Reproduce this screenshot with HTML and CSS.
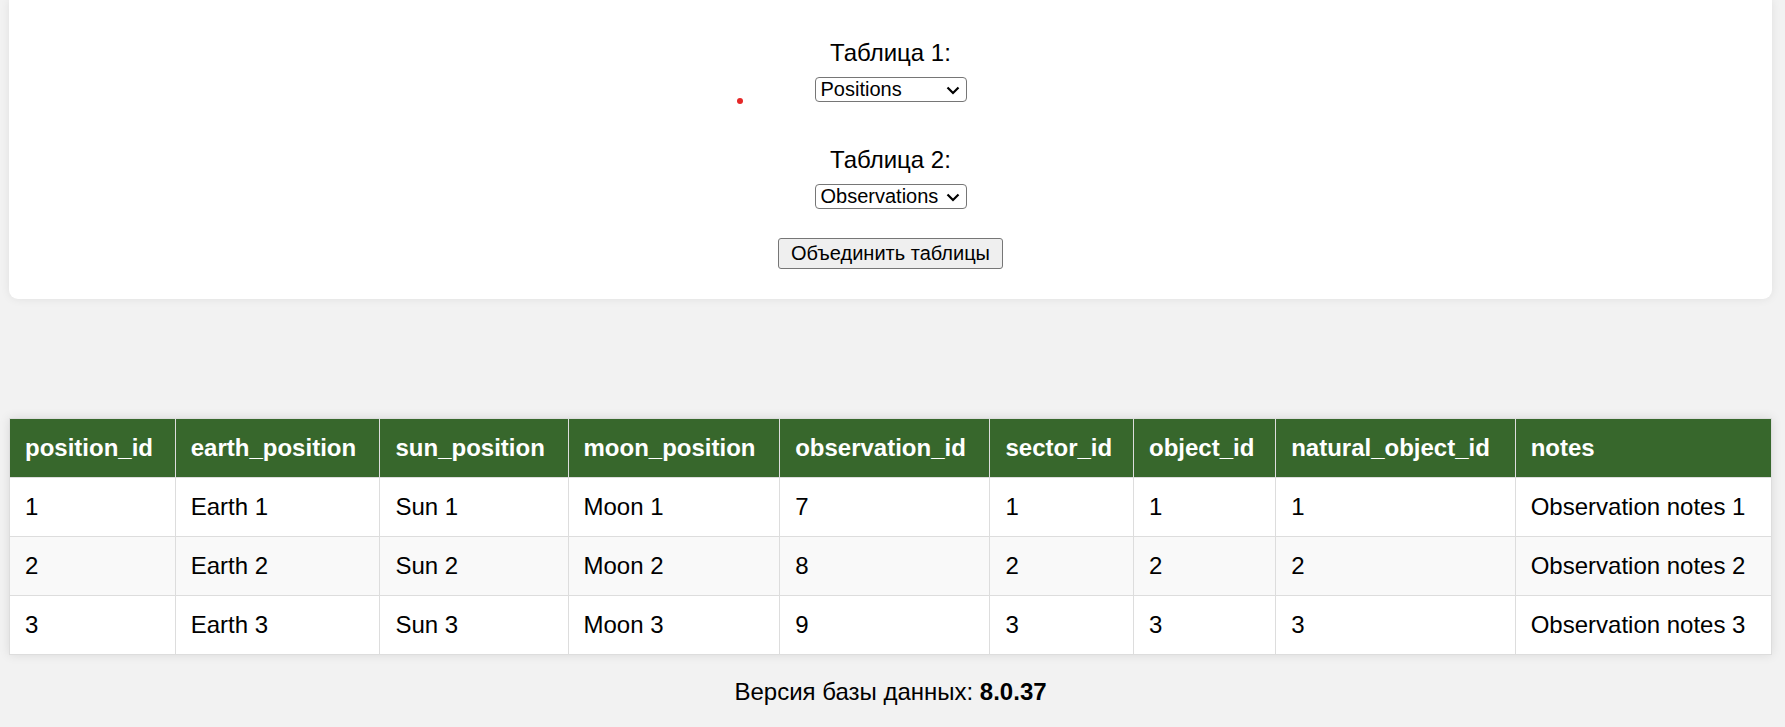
FILE: index.html
```html
<!DOCTYPE html>
<html lang="ru">
<head>
<meta charset="utf-8">
<title>Объединение таблиц</title>
<link rel="stylesheet" href="styles.css">
</head>
<body>
<div class="page">
  <form class="card">
    <div class="field">
      <label class="field-label" for="t1">Таблица 1:</label>
      <span class="select-wrap">
        <select id="t1" class="select">
          <option>Positions</option>
          <option>Observations</option>
        </select>
        <svg class="chev" width="14" height="9" viewBox="0 0 14 9"><path d="M1.5 1.5 L7 7 L12.5 1.5" fill="none" stroke="#000" stroke-width="2.2"/></svg>
      </span>
    </div>
    <div class="field field-second">
      <label class="field-label" for="t2">Таблица 2:</label>
      <span class="select-wrap">
        <select id="t2" class="select">
          <option>Observations</option>
          <option>Positions</option>
        </select>
        <svg class="chev" width="14" height="9" viewBox="0 0 14 9"><path d="M1.5 1.5 L7 7 L12.5 1.5" fill="none" stroke="#000" stroke-width="2.2"/></svg>
      </span>
    </div>
    <button type="button" class="btn">Объединить таблицы</button>
    <span class="dot"></span>
  </form>

  <table class="result">
    <thead>
      <tr>
        <th>position_id</th><th>earth_position</th><th>sun_position</th><th>moon_position</th><th>observation_id</th><th>sector_id</th><th>object_id</th><th>natural_object_id</th><th>notes</th>
      </tr>
    </thead>
    <tbody>
      <tr><td>1</td><td>Earth 1</td><td>Sun 1</td><td>Moon 1</td><td>7</td><td>1</td><td>1</td><td>1</td><td>Observation notes 1</td></tr>
      <tr><td>2</td><td>Earth 2</td><td>Sun 2</td><td>Moon 2</td><td>8</td><td>2</td><td>2</td><td>2</td><td>Observation notes 2</td></tr>
      <tr><td>3</td><td>Earth 3</td><td>Sun 3</td><td>Moon 3</td><td>9</td><td>3</td><td>3</td><td>3</td><td>Observation notes 3</td></tr>
    </tbody>
  </table>

  <p class="version">Версия базы данных: <b>8.0.37</b></p>
</div>
</body>
</html>
```
FILE: styles.css
```css
html, body {
  margin: 0;
  padding: 0;
  background: #f2f2f2;
}
body {
  font-family: "Liberation Sans", Arial, sans-serif;
  font-size: 24px;
  color: #000;
}
.page {
  padding: 0 13px 0 9px;
}
.card {
  position: relative;
  background: #fff;
  border-radius: 0 0 9px 9px;
  box-shadow: 0 0 10px rgba(0, 0, 0, 0.08);
  padding: 39px 0 30px;
  display: flex;
  flex-direction: column;
  align-items: center;
}
.field {
  display: flex;
  flex-direction: column;
  align-items: center;
}
.field-second {
  margin-top: 44px;
}
.field-label {
  display: block;
  line-height: 27px;
  margin-bottom: 11px;
}
.select-wrap {
  position: relative;
  display: block;
  width: 152px;
  height: 25px;
}
.select {
  appearance: none;
  -webkit-appearance: none;
  display: block;
  box-sizing: border-box;
  width: 152px;
  height: 25px;
  margin: 0;
  padding: 0 0 0 5px;
  font-family: "Liberation Sans", Arial, sans-serif;
  font-size: 20px;
  line-height: 23px;
  color: #000;
  background: #fff;
  border: 1px solid #767676;
  border-radius: 4px;
}
.chev {
  position: absolute;
  right: 7px;
  top: 9px;
  pointer-events: none;
}
.btn {
  box-sizing: border-box;
  margin-top: 29px;
  height: 31px;
  padding: 0 12px;
  font-family: "Liberation Sans", Arial, sans-serif;
  font-size: 20px;
  color: #000;
  background: #efefef;
  border: 1px solid #767676;
  border-radius: 3px;
}
.dot {
  position: absolute;
  left: 728px;
  top: 98px;
  width: 6px;
  height: 6px;
  border-radius: 50%;
  background: #e52727;
}
.result {
  margin-top: 119px;
  width: 100%;
  border-collapse: collapse;
  background: #fff;
  box-shadow: 0 0 10px rgba(0, 0, 0, 0.1);
}
.result th,
.result td {
  border: 1px solid #dddddd;
  padding: 15px;
  line-height: 28px;
  text-align: left;
  white-space: nowrap;
}
.result th {
  background: #37672c;
  color: #fff;
  font-weight: bold;
}
.result tbody tr:nth-child(even) td {
  background: #f9f9f9;
}
.version {
  margin: 23px 0 0;
  text-align: center;
  line-height: 27px;
}
```
